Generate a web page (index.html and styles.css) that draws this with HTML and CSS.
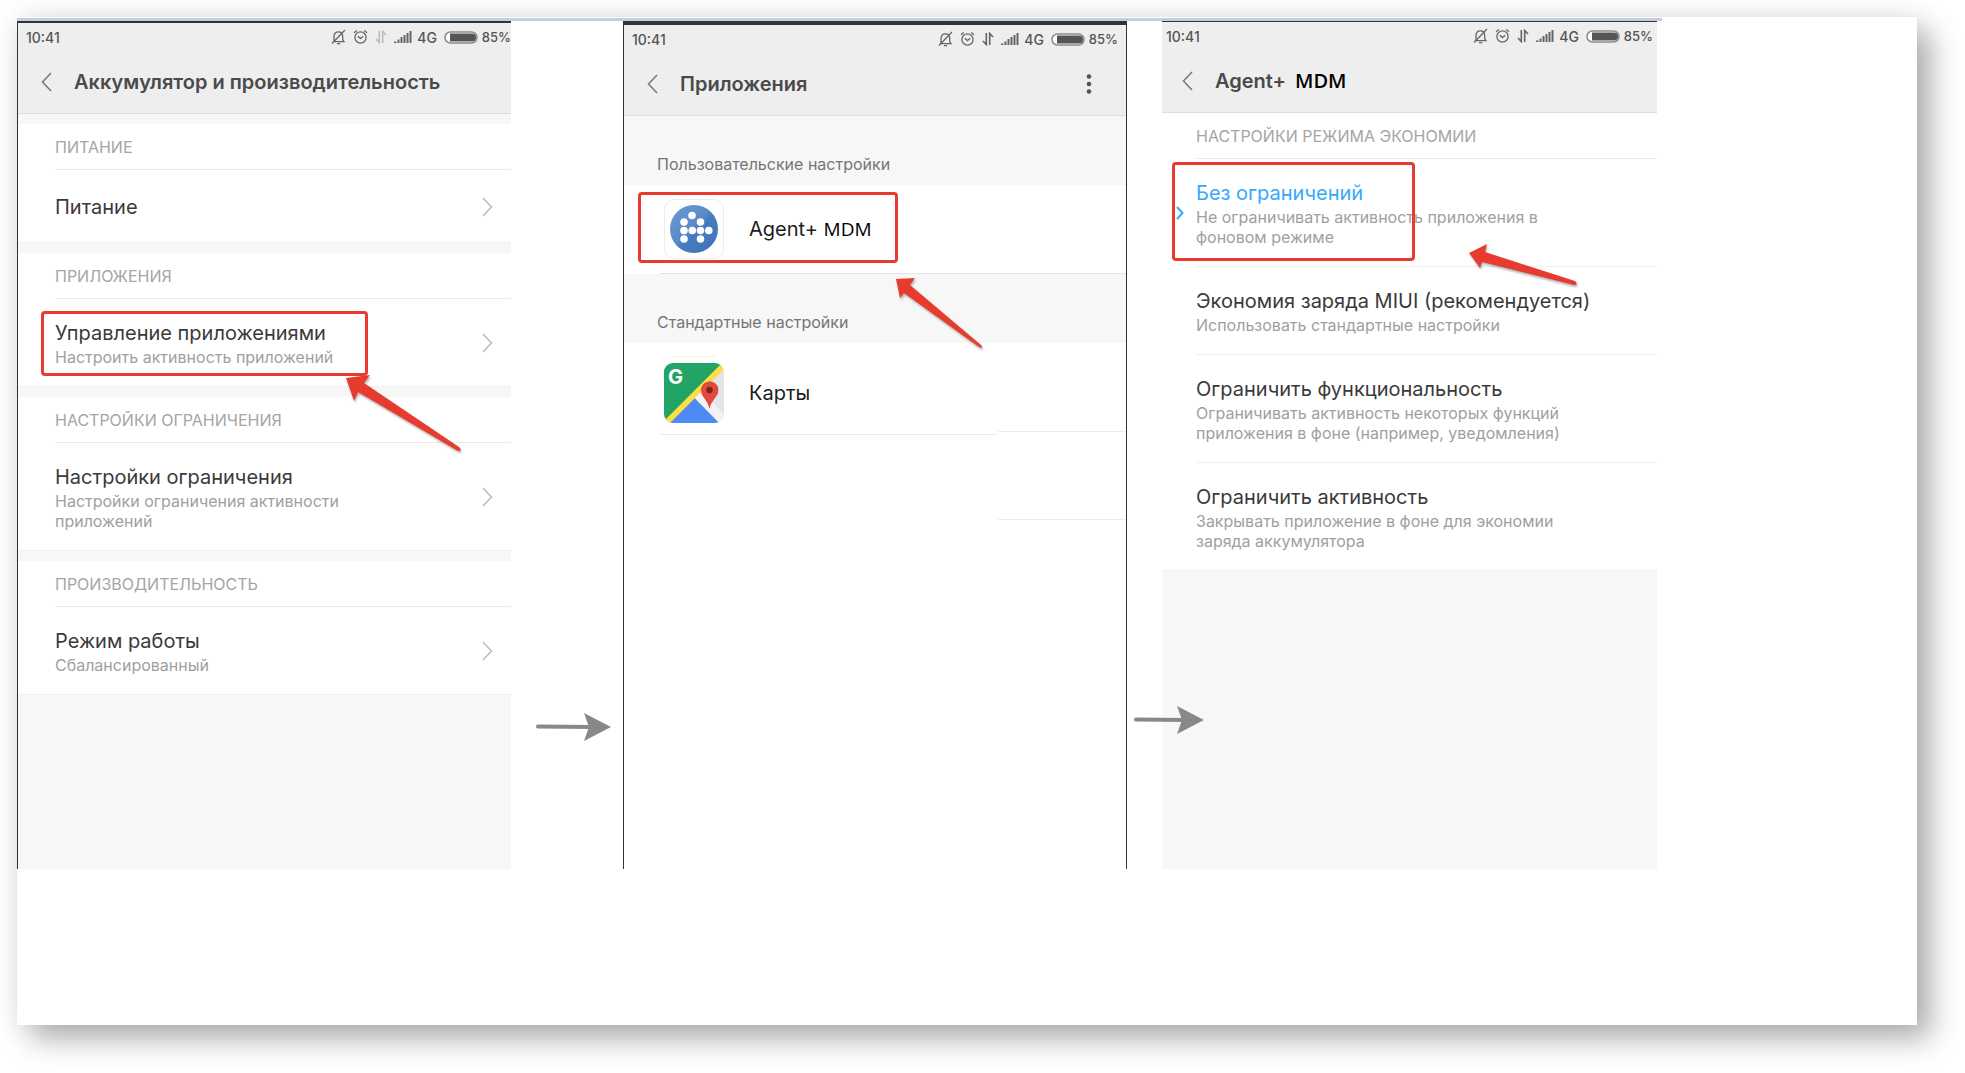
FILE: index.html
```html
<!DOCTYPE html>
<html lang="ru">
<head>
    <meta charset="UTF-8">
    <meta name="viewport" content="width=device-width, initial-scale=1.0">
    <title>Настройки режима экономии</title>
    <link rel="stylesheet" href="styles.css">
</head>
<body>
    <!-- Shared icons -->
    <svg class="sprite" aria-hidden="true">
        <symbol id="bell-off" viewBox="0 0 15 16">
            <path d="M3 12.200V7.500C3 4.500 4.800 2.800 7.300 2.800S11.700 4.500 11.700 7.500V10.500L13 12.600H1.800M14 1L1 14.500M6 14.600H9.200" />
        </symbol>
        <symbol id="alarm" viewBox="0 0 15 16">
            <circle cx="7.500" cy="8.500" r="5.600" />
            <path d="M1 3.800L3.800 1.400M14 3.800L11.200 1.400M4.800 7.200L7.500 9.600L10.200 7.200" />
        </symbol>
        <symbol id="data" viewBox="0 0 12 14">
            <path d="M4.300 1V12.500L1 9M7.700 13V1.500L11 5" />
        </symbol>
        <symbol id="signal" viewBox="0 0 18 14">
            <path d="M0 13V11.500H2.500V13ZM3.500 13V9.500H5.500V13ZM6.500 13V7H8.500V13ZM9.500 13V5H11.500V13ZM12.500 13V3H14.500V13ZM15.500 13V1H17.500V13Z" />
        </symbol>
        <symbol id="battery" viewBox="0 0 34 13">
            <rect x="1" y="1" width="32" height="11" rx="5.500" fill="#fff" stroke="#8a8a8a" stroke-width="1.500" />
            <path d="M6 2.500H28A4 4 0 0 1 28 10.500H6Z" fill="#555" />
        </symbol>
        <symbol id="back" viewBox="0 0 11 20">
            <path d="M10 1L1.500 10L10 19" />
        </symbol>
        <symbol id="next" viewBox="0 0 11 20">
            <path d="M1 1L9.500 10L1 19" />
        </symbol>
    </svg>

    <div class="sheet">
        <div class="sheet-line"></div>
        <div class="steps">

            <!-- Step 1: battery settings -->
            <section class="phone phone-battery">
                <div class="status">
                    <span class="time">10:41</span>
                    <svg class="s-icon bell"><use href="#bell-off" /></svg>
                    <svg class="s-icon alarm"><use href="#alarm" /></svg>
                    <svg class="s-icon data faded"><use href="#data" /></svg>
                    <svg class="signal"><use href="#signal" /></svg>
                    <span class="net">4G</span>
                    <svg class="battery"><use href="#battery" /></svg>
                    <span class="level">85%</span>
                </div>
                <header class="appbar">
                    <button class="back" aria-label="Назад"><svg><use href="#back" /></svg></button>
                    <h2>Аккумулятор и производительность</h2>
                </header>

                <div class="group">
                    <h3>Питание</h3>
                    <a class="row" href="#">
                        <span class="row-text"><span class="title">Питание</span></span>
                        <svg class="next"><use href="#next" /></svg>
                    </a>
                </div>
                <div class="group">
                    <h3>Приложения</h3>
                    <a class="row" href="#">
                        <span class="row-text">
                            <span class="title">Управление приложениями</span>
                            <span class="sub">Настроить активность приложений</span>
                        </span>
                        <svg class="next"><use href="#next" /></svg>
                        <span class="mark mark-manage"></span>
                        <svg class="pointer pointer-manage" viewBox="0 0 118 78">
                            <path d="M1 4L25 1L19 9L114 73Q118 77 113 77L13 18L9 27Z" />
                        </svg>
                    </a>
                </div>
                <div class="group">
                    <h3>Настройки ограничения</h3>
                    <a class="row" href="#">
                        <span class="row-text">
                            <span class="title">Настройки ограничения</span>
                            <span class="sub">Настройки ограничения активности приложений</span>
                        </span>
                        <svg class="next"><use href="#next" /></svg>
                    </a>
                </div>
                <div class="group">
                    <h3>Производительность</h3>
                    <a class="row" href="#">
                        <span class="row-text">
                            <span class="title">Режим работы</span>
                            <span class="sub">Сбалансированный</span>
                        </span>
                        <svg class="next"><use href="#next" /></svg>
                    </a>
                </div>
            </section>

            <div class="connector connector-first">
                <svg viewBox="0 0 75 28" width="75" height="28">
                    <path class="shaft" d="M2 13.500L56 14" />
                    <path d="M48 0L75 14L48 28L53 14Z" />
                </svg>
            </div>

            <!-- Step 2: application list -->
            <section class="phone phone-apps">
                <div class="status">
                    <span class="time">10:41</span>
                    <svg class="s-icon bell"><use href="#bell-off" /></svg>
                    <svg class="s-icon alarm"><use href="#alarm" /></svg>
                    <svg class="s-icon data"><use href="#data" /></svg>
                    <svg class="signal"><use href="#signal" /></svg>
                    <span class="net">4G</span>
                    <svg class="battery"><use href="#battery" /></svg>
                    <span class="level">85%</span>
                </div>
                <header class="appbar">
                    <button class="back" aria-label="Назад"><svg><use href="#back" /></svg></button>
                    <h2>Приложения</h2>
                    <button class="more" aria-label="Меню">
                        <svg viewBox="0 0 6 20" width="6" height="20">
                            <circle cx="3" cy="2.500" r="2.300" />
                            <circle cx="3" cy="10" r="2.300" />
                            <circle cx="3" cy="17.500" r="2.300" />
                        </svg>
                    </button>
                </header>

                <h3 class="list-label">Пользовательские настройки</h3>
                <a class="app app-agent" href="#">
                    <svg class="app-icon" viewBox="0 0 60 60">
                        <defs>
                            <linearGradient id="agent-blue" x1="0" y1="0" x2="1" y2="1">
                                <stop offset="0" stop-color="#6a9ad0" />
                                <stop offset="0.450" stop-color="#5a8cc8" />
                                <stop offset="0.550" stop-color="#467bbd" />
                                <stop offset="1" stop-color="#3f74b8" />
                            </linearGradient>
                        </defs>
                        <rect x="0.500" y="0.500" width="59" height="59" rx="10" fill="#fff" stroke="#ececec" />
                        <circle cx="30" cy="30" r="24" fill="url(#agent-blue)" />
                        <g fill="#fff">
                            <circle cx="28" cy="16.500" r="3.800" />
                            <circle cx="20" cy="23" r="3.800" />
                            <circle cx="36.500" cy="23" r="3.800" />
                            <circle cx="20" cy="31.500" r="3.800" />
                            <circle cx="28.300" cy="31.500" r="3.800" />
                            <circle cx="36.500" cy="31.500" r="3.800" />
                            <circle cx="44.800" cy="31.500" r="3.800" />
                            <circle cx="20" cy="40" r="3.800" />
                            <circle cx="36.500" cy="40" r="3.800" />
                        </g>
                    </svg>
                    <span class="app-name">Agent+ <span class="mdm">MDM</span></span>
                    <span class="mark mark-agent"></span>
                    <svg class="pointer pointer-agent" viewBox="0 0 90 72">
                        <path d="M1 2L20 1L15 8L86 68Q89 72 84 70L9 16L5 21Z" />
                    </svg>
                </a>

                <h3 class="list-label">Стандартные настройки</h3>
                <a class="app app-maps" href="#">
                    <svg class="app-icon" viewBox="0 0 60 60">
                        <clipPath id="maps-tile"><rect width="60" height="60" rx="9" /></clipPath>
                        <path d="M8 -6.500H53" stroke="#fbf3cf" />
                        <g clip-path="url(#maps-tile)">
                            <rect width="60" height="60" fill="#e4e5e7" />
                            <path d="M0 0H60L0 60Z" fill="#22a464" />
                            <path d="M30 34L56 60H62V54L38 28Z" fill="#f3f3f5" />
                            <path d="M2 62L30 34.500L55 60V62Z" fill="#4d8af5" />
                            <path d="M0 58L60 -2V6L6 60H0Z" fill="#ffdd45" />
                        </g>
                        <path d="M45.500 46C44 37 37 34 37 27A8.700 8.700 0 0 1 54.400 27C54.400 34 47 37 45.500 46Z" fill="#de4b3e" />
                        <circle cx="45.500" cy="27" r="3.200" fill="#7d231d" />
                        <text x="4" y="21" class="g-letter">G</text>
                    </svg>
                    <span class="app-name">Карты</span>
                </a>
                <div class="list-end">
                    <span class="end-left"></span>
                    <span class="end-right"></span>
                </div>
            </section>

            <div class="connector connector-second">
                <svg viewBox="0 0 70 28" width="70" height="28">
                    <path class="shaft" d="M2 13.500L52 14" />
                    <path d="M43 0L70 14L43 28L48 14Z" />
                </svg>
            </div>

            <!-- Step 3: saving mode of the application -->
            <section class="phone phone-mode">
                <div class="status">
                    <span class="time">10:41</span>
                    <svg class="s-icon bell"><use href="#bell-off" /></svg>
                    <svg class="s-icon alarm"><use href="#alarm" /></svg>
                    <svg class="s-icon data"><use href="#data" /></svg>
                    <svg class="signal"><use href="#signal" /></svg>
                    <span class="net">4G</span>
                    <svg class="battery"><use href="#battery" /></svg>
                    <span class="level">85%</span>
                </div>
                <header class="appbar">
                    <button class="back" aria-label="Назад"><svg><use href="#back" /></svg></button>
                    <h2>Agent+ <span class="mdm">MDM</span></h2>
                </header>

                <div class="group">
                    <h3>Настройки режима экономии</h3>
                    <label class="row">
                        <input type="radio" name="mode" checked>
                        <span class="row-text">
                            <span class="title">Без ограничений</span>
                            <span class="sub">Не ограничивать активность приложения в фоновом режиме</span>
                        </span>
                        <svg class="tick" viewBox="0 0 8 14"><path d="M1 1L6.500 7L1 13" /></svg>
                        <span class="mark mark-mode"></span>
                        <svg class="pointer pointer-mode" viewBox="0 0 112 44">
                            <path d="M1 10L19 1L17 9L107 38Q111 42 106 42L14 19L12 25Z" />
                        </svg>
                    </label>
                    <label class="row">
                        <input type="radio" name="mode">
                        <span class="row-text">
                            <span class="title">Экономия заряда MIUI (рекомендуется)</span>
                            <span class="sub">Использовать стандартные настройки</span>
                        </span>
                    </label>
                    <label class="row">
                        <input type="radio" name="mode">
                        <span class="row-text">
                            <span class="title">Ограничить функциональность</span>
                            <span class="sub">Ограничивать активность некоторых функций приложения в фоне (например, уведомления)</span>
                        </span>
                    </label>
                    <label class="row">
                        <input type="radio" name="mode">
                        <span class="row-text">
                            <span class="title">Ограничить активность</span>
                            <span class="sub">Закрывать приложение в фоне для экономии заряда аккумулятора</span>
                        </span>
                    </label>
                </div>
            </section>
        </div>
    </div>
</body>
</html>
```
FILE: styles.css
```css
* {
    box-sizing: border-box;
}

body {
    margin: 0;
    padding: 17px 48px 48px 17px;
    background-color: #fff;
    font-family: Inter, "Noto Sans", sans-serif;
    color: #3a3a3a;
}

h2,
h3 {
    margin: 0;
}

a {
    color: inherit;
    text-decoration: none;
}

button {
    padding: 0;
    border: 0;
    background: none;
    cursor: pointer;
}

svg {
    display: block;
    flex: none;
    overflow: visible;
}

.sprite {
    position: absolute;
    width: 0;
    height: 0;
}

/* Sheet with the drop shadow */
.sheet {
    min-height: calc(100vh - 65px);
    padding-top: 1px;
    background-color: #fff;
    box-shadow: 14px 14px 28px rgba(0, 0, 0, 0.3), 0 0 30px rgba(0, 0, 0, 0.08);
}

.sheet-line {
    width: 86.600%;
    height: 3px;
    background-color: #c5cee1;
}

.steps {
    display: grid;
    grid-template-columns: 494fr 112fr 504fr 35fr 495fr 260fr;
    grid-auto-rows: minmax(848px, auto);
}

/* Phones */
.phone {
    --gutter: 37px;
    min-width: 0;
    border-top: 2px solid #333;
    background-color: #f7f7f7;
}

.phone-battery {
    border-left: 1px solid #333;
}

.phone-apps {
    --gutter: 33px;
    border: solid #333;
    border-width: 4px 1px 0;
    background-color: #fff;
}

.phone-mode {
    --gutter: 34px;
    border-top-width: 1px;
}

/* Status bar */
.status {
    display: flex;
    align-items: center;
    height: 28px;
    padding: 0 8px;
    background-color: #eee;
    font-size: 14px;
    font-weight: 500;
    color: #555;
}

.phone-battery .status {
    padding-right: 0;
}

.phone-mode .status {
    padding: 0 4px;
}

.time {
    margin-right: auto;
}

.s-icon {
    width: 15px;
    height: 16px;
    margin-right: 7px;
    fill: none;
    stroke: #666;
    stroke-width: 1.300;
}

.data {
    width: 12px;
    height: 14px;
    stroke-width: 1.600;
}

.faded {
    stroke: #bbb;
}

.signal {
    width: 18px;
    height: 14px;
    margin-right: 5px;
    fill: #666;
}

.battery {
    width: 34px;
    height: 13px;
    margin: 0 4px 0 7px;
}

.level {
    font-size: 13px;
}

/* Title bar */
.appbar {
    display: flex;
    align-items: center;
    height: 63px;
    padding: 0 34px 0 23px;
    border-bottom: 1px solid #dedede;
    background-color: #eee;
}

.phone-mode .appbar {
    padding-left: 20px;
}

.back {
    margin-right: 22px;
}

.back svg {
    width: 11px;
    height: 20px;
    fill: none;
    stroke: #777;
    stroke-width: 1.500;
}

.appbar h2 {
    font-size: 20px;
    font-weight: 600;
    line-height: 28px;
    color: #4a4a4a;
    white-space: nowrap;
}

.more {
    margin-left: auto;
    fill: #555;
}

.mdm {
    font-family: "Open Sans", sans-serif;
    color: #000;
}

.appbar .mdm {
    margin-left: 4px;
}

/* Setting groups */
.group {
    background-color: #fff;
}

.phone-battery .group {
    margin-top: 10px;
    border-bottom: 1px solid #f0f0f0;
}

.group h3 {
    height: 46px;
    margin-left: var(--gutter);
    border-bottom: 1px solid #ebebeb;
    font-size: 16px;
    font-weight: 400;
    line-height: 46px;
    color: #a5a5a5;
    text-transform: uppercase;
    white-space: nowrap;
}

.row {
    position: relative;
    display: flex;
    align-items: center;
    gap: 50px;
    min-height: 72px;
    margin-left: var(--gutter);
    padding: 20px 18px 19px 0;
    cursor: pointer;
}

.row-text {
    flex: 1;
}

.title,
.sub {
    display: block;
}

.title {
    font-size: 20px;
    line-height: 28px;
    white-space: nowrap;
}

.sub {
    font-size: 16px;
    line-height: 20px;
    color: #a0a0a0;
}

.next {
    width: 11px;
    height: 20px;
    fill: none;
    stroke: #bbb;
    stroke-width: 1.500;
}

.phone-mode .row {
    padding-right: 60px;
    border-bottom: 1px solid #efefef;
}

.phone-mode .row:last-child {
    margin-left: 0;
    padding-left: var(--gutter);
}

.row input {
    position: absolute;
    opacity: 0;
}

.row input:checked + .row-text .title {
    color: #36a9fb;
}

.tick {
    position: absolute;
    left: -20px;
    top: 47px;
    width: 8px;
    height: 14px;
    fill: none;
    stroke: #36a9fb;
    stroke-width: 2;
}

/* Application list */
.list-label {
    height: 69px;
    padding: 38px 0 11px var(--gutter);
    background-color: #f7f7f7;
    font-size: 16px;
    font-weight: 400;
    line-height: 20px;
    color: #757575;
}

.app {
    position: relative;
    display: flex;
    align-items: center;
    gap: 25px;
    height: 89px;
    margin-left: 36px;
    padding-left: 4px;
    border-bottom: 1px solid #e3e3e3;
}

.app-maps {
    height: 88px;
    padding-top: 12px;
    border-bottom: 0;
}

.app-icon {
    width: 60px;
    height: 60px;
}

.app-name {
    font-size: 20px;
    color: #1c1c1c;
}

.app-name .mdm {
    font-size: 19px;
}

.g-letter {
    font-size: 20px;
    font-weight: 700;
    fill: #fff;
}

.list-end {
    display: flex;
    padding-left: 35px;
}

.end-left {
    flex: 339;
    height: 4px;
    border-bottom: 1px solid #ebebeb;
}

.end-right {
    flex: 128;
    height: 89px;
    border: solid #ebebeb;
    border-width: 1px 0;
}

/* Red frames and pointers over the rows */
.mark {
    position: absolute;
    z-index: 1;
    border: 3px solid #e63b2e;
    border-radius: 4px;
}

.mark-manage {
    left: -14px;
    top: 12px;
    width: 327px;
    height: 65px;
}

.mark-agent {
    left: -22px;
    top: 7px;
    width: 260px;
    height: 71px;
}

.mark-mode {
    left: -24px;
    top: 3px;
    width: 243px;
    height: 99px;
}

.pointer {
    position: absolute;
    z-index: 2;
    fill: #e63b2e;
    filter: drop-shadow(1px 2px 1px rgba(0, 0, 0, 0.3));
}

.pointer-manage {
    left: 290px;
    top: 75px;
    width: 118px;
    height: 78px;
}

.pointer-agent {
    left: 235px;
    top: 92px;
    width: 90px;
    height: 72px;
}

.pointer-mode {
    left: 272px;
    top: 84px;
    width: 112px;
    height: 44px;
}

/* Grey arrows between the phones */
.connector {
    display: flex;
    align-items: flex-end;
    z-index: 3;
    min-width: 0;
    fill: #888;
}

.connector-first {
    padding: 0 0 128px 25px;
}

.connector-second {
    padding: 0 0 135px 7px;
}

.shaft {
    stroke: #888;
    stroke-width: 4;
    stroke-linecap: round;
}
```
